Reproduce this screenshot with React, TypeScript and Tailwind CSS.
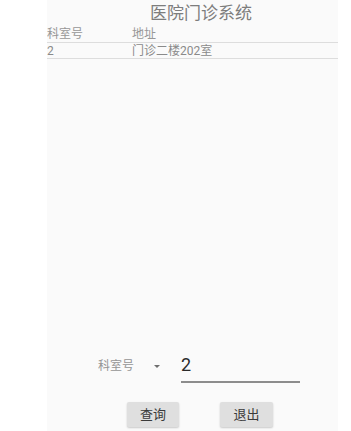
export default function App() {
  return (
    <div className="w-[351px] h-[431px] bg-white flex font-['Roboto','Noto_Sans_CJK_SC',sans-serif]">
      <div className="ml-[47px] w-[291px] h-full bg-[#fafafa] flex flex-col">
        {/* 标题 */}
        <div className="h-[27px] pl-[103px] pt-[3px] text-[17px] leading-[20px] text-[#7d7d7d]">
          医院门诊系统
        </div>

        {/* 表头 */}
        <div className="flex h-[16px] border-b border-[#dddddd] text-[12px] leading-[14px] text-[#979797]">
          <div className="w-[85px]">科室号</div>
          <div>地址</div>
        </div>
        <div className="flex h-[16px] border-b border-[#dddddd] text-[12px] leading-[16px] text-[#8a8a8a]">
          <div className="w-[85px]">2</div>
          <div>门诊二楼202室</div>
        </div>

        <div className="flex-1" />

        {/* 查询条件 */}
        <div className="flex items-start h-[30px] pl-[51px]">
          <span className="mt-[6px] text-[12px] leading-[14px] text-[#959595]">科室号</span>
          <svg className="ml-[20px] mt-[12px]" width="6" height="3" viewBox="0 0 6 3">
            <path d="M0 0 L6 0 L3 3 Z" fill="#6e6e6e" />
          </svg>
          <div className="ml-[21px] w-[119px] h-[30px] pt-[1px] border-b-2 border-[#8c8c8c] text-[18px] leading-[22px] text-[#2a2a2a]">
            2
          </div>
        </div>

        {/* 按钮 */}
        <div className="flex mt-[19px] mb-[4px] pl-[80px] gap-[41px]">
          <button className="w-[52px] h-[25px] bg-[#dfdfdf] rounded-[2px] shadow-[0_1px_2px_rgba(0,0,0,0.2)] text-[13px] text-[#3a3a3a]">
            查询
          </button>
          <button className="w-[53px] h-[25px] bg-[#dfdfdf] rounded-[2px] shadow-[0_1px_2px_rgba(0,0,0,0.2)] text-[13px] text-[#3a3a3a]">
            退出
          </button>
        </div>
      </div>
    </div>
  );
}
